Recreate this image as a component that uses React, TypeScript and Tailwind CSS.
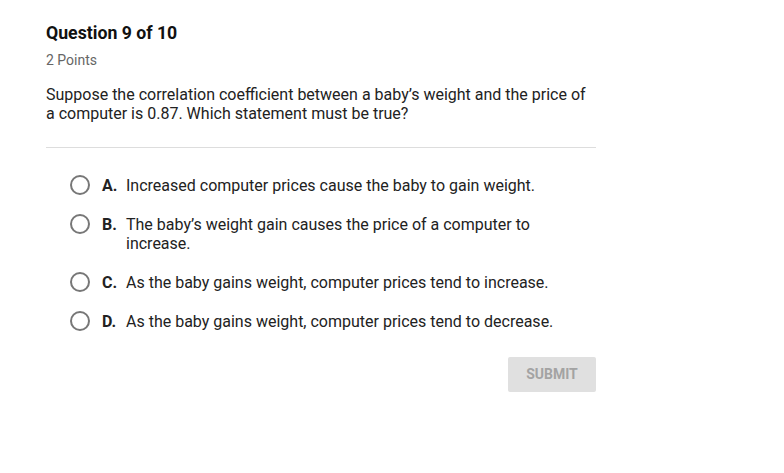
const options = [
  { letter: "A.", text: "Increased computer prices cause the baby to gain weight." },
  { letter: "B.", text: "The baby’s weight gain causes the price of a computer to increase." },
  { letter: "C.", text: "As the baby gains weight, computer prices tend to increase." },
  { letter: "D.", text: "As the baby gains weight, computer prices tend to decrease." },
];

export default function App() {
  return (
    <div className="min-h-screen bg-white font-['Roboto',sans-serif] text-[#1a1a1a]">
      <div className="w-[550px] ml-[46px] pt-[23px]">
        <h1 className="text-[17.7px] font-bold leading-[20px] text-[#111]">Question 9 of 10</h1>
        <div className="mt-[9px] text-[14px] leading-[16px] text-[#666]">2 Points</div>
        <p className="mt-[17px] text-[16px] leading-[19px] text-[#222] pr-[2px]">
          Suppose the correlation coefficient between a baby’s weight and the price of a computer is 0.87. Which statement must be true?
        </p>
        <div className="mt-[24px] h-px bg-[#dddddd]" />
        <div className="mt-[28px] pl-[24px] flex flex-col gap-[20px]">
          {options.map((o) => (
            <div key={o.letter} className="flex items-start">
              <span className="mt-[-1px] w-[20px] h-[20px] rounded-full border-2 border-[#777] shrink-0" />
              <div className="ml-[12px] flex text-[16px] leading-[19px] text-[#222] w-[470px]">
                <span className="font-bold w-[24px] shrink-0">{o.letter}</span>
                <span>{o.text}</span>
              </div>
            </div>
          ))}
        </div>
        <div className="mt-[26px] flex justify-end">
          <button className="w-[88px] h-[35px] bg-[#e0e0e0] text-[#a3a3a3] text-[14px] font-bold rounded-[2px]">
            SUBMIT
          </button>
        </div>
      </div>
    </div>
  );
}
